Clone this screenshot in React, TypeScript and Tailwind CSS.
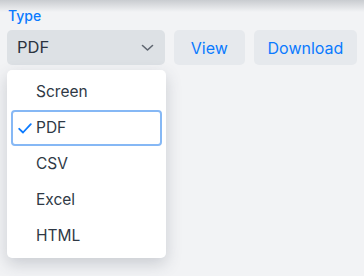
const options = ["Screen", "PDF", "CSV", "Excel", "HTML"];

export default function App() {
    const selected = "PDF";
    return (
        <div
            className="w-[364px] h-[276px] bg-[#f2f3f5] relative overflow-hidden"
            style={{ fontFamily: "Inter, 'Noto Sans', sans-serif" }}
        >
            {/* top shade */}
            <div className="absolute inset-x-0 top-0 h-[12px] bg-gradient-to-b from-[#c9ccd0] to-[#f2f3f5]" />

            <div className="relative px-[7px] pt-[6px]">
                <div className="text-[14px] leading-[19px] font-medium text-[#0a7aff] pl-[1px]">Type</div>

                <div className="flex gap-[9px] mt-[5px]">
                    <div className="relative w-[159px]">
                        <button className="w-full h-[35px] rounded-[5px] bg-[#dde1e5] flex items-center justify-between pl-[10px] pr-[11px] text-[16.5px] text-[#2b3440]">
                            <span>{selected}</span>
                            <svg width="13" height="8" viewBox="0 0 13 8" fill="none">
                                <path d="M1.5 1.5 L6.5 6 L11.5 1.5" stroke="#5f6670" strokeWidth="1.6" strokeLinecap="round" strokeLinejoin="round" />
                            </svg>
                        </button>

                        {/* Menu */}
                        <div className="absolute left-0 top-[40px] w-[159px] bg-white rounded-[5px] shadow-[0_6px_16px_rgba(60,70,85,0.22)] py-[4px] z-10">
                            {options.map((opt) => (
                                <div key={opt} className="px-[4px]">
                                    <div
                                        className={`h-[36px] flex items-center rounded-[4px] text-[15.5px] text-[#2f3945] ${
                                            opt === selected ? "border-2 border-[#86b8f5]" : "border-2 border-transparent"
                                        }`}
                                    >
                                        <span className="w-[23px] flex justify-end pr-[4px]">
                                            {opt === selected && (
                                                <svg width="14" height="11" viewBox="0 0 14 11" fill="none">
                                                    <path d="M1.2 5.8 L5 9.5 L12.8 1.2" stroke="#0a7aff" strokeWidth="1.8" strokeLinecap="round" strokeLinejoin="round" />
                                                </svg>
                                            )}
                                        </span>
                                        <span>{opt}</span>
                                    </div>
                                </div>
                            ))}
                        </div>
                    </div>

                    <button className="w-[72px] h-[35px] rounded-[5px] bg-[#e6e9ed] text-[16px] text-[#0a7aff]">View</button>
                    <button className="w-[104px] h-[35px] rounded-[5px] bg-[#e6e9ed] text-[16px] text-[#0a7aff]">Download</button>
                </div>
            </div>
        </div>
    );
}
